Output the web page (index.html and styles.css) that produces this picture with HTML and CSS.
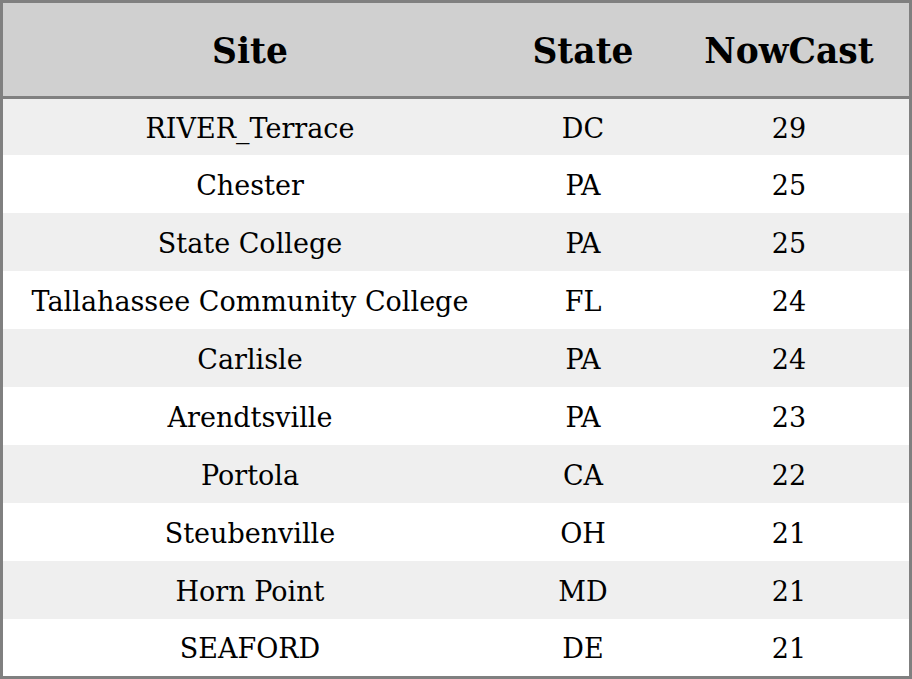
FILE: index.html
```html
<!DOCTYPE html>
<html>
<head>
<meta charset="utf-8">
<link rel="stylesheet" href="styles.css">
</head>
<body>
<table class="aq">
  <colgroup><col class="c-site"><col class="c-state"><col class="c-now"></colgroup>
  <thead>
    <tr><th>Site</th><th>State</th><th>NowCast</th></tr>
  </thead>
  <tbody>
    <tr class="odd first"><td>RIVER_Terrace</td><td>DC</td><td>29</td></tr>
    <tr><td>Chester</td><td>PA</td><td>25</td></tr>
    <tr class="odd"><td>State College</td><td>PA</td><td>25</td></tr>
    <tr><td>Tallahassee Community College</td><td>FL</td><td>24</td></tr>
    <tr class="odd"><td>Carlisle</td><td>PA</td><td>24</td></tr>
    <tr><td>Arendtsville</td><td>PA</td><td>23</td></tr>
    <tr class="odd"><td>Portola</td><td>CA</td><td>22</td></tr>
    <tr><td>Steubenville</td><td>OH</td><td>21</td></tr>
    <tr class="odd"><td>Horn Point</td><td>MD</td><td>21</td></tr>
    <tr class="last"><td>SEAFORD</td><td>DE</td><td>21</td></tr>
  </tbody>
</table>
</body>
</html>
```
FILE: styles.css
```css
html, body {
  margin: 0;
  padding: 0;
  background: #ffffff;
}
.aq {
  border-collapse: separate;
  border-spacing: 0;
  border: 3px solid #808080;
  width: 912px;
  table-layout: fixed;
  font-family: "DejaVu Serif", serif;
  color: #000;
}
.c-site { width: 494px; }
.c-state { width: 172px; }
.c-now { width: 240px; }
.aq th {
  box-sizing: border-box;
  background: #d0d0d0;
  height: 96px;
  padding: 4px 0 0;
  border-bottom: 3px solid #808080;
  font-size: 34.5px;
  line-height: 1.2;
  font-weight: bold;
  text-align: center;
  vertical-align: middle;
}
.aq td {
  box-sizing: border-box;
  height: 58px;
  padding: 4px 0 0;
  font-size: 27px;
  line-height: 1.2;
  text-align: center;
  vertical-align: middle;
  background: #ffffff;
}
.aq tr.odd td { background: #efefef; }
.aq tr.first td { height: 56px; }
.aq tr.last td { height: 57px; }
```
